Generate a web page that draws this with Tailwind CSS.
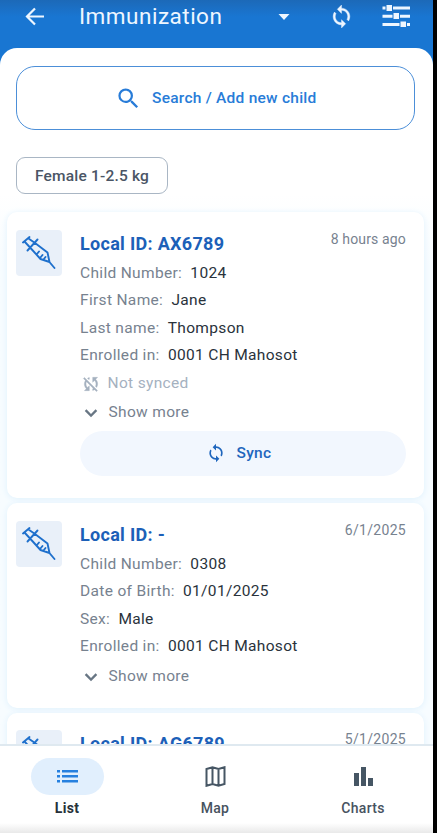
<!DOCTYPE html>
<html lang="en">
<head>
<meta charset="utf-8">
<title>Immunization</title>
<script src="https://cdn.jsdelivr.net/npm/@tailwindcss/browser@4"></script>
</head>
<body class="h-[833px] w-[437px] overflow-hidden bg-black font-['Roboto',sans-serif]">
<svg class="hidden">
  <symbol id="sync" viewBox="0 0 24 24"><path d="M12 4V1L8 5l4 4V6c3.31 0 6 2.69 6 6 0 1.01-.25 1.97-.7 2.8l1.46 1.46C19.54 15.03 20 13.57 20 12c0-4.42-3.58-8-8-8zm0 14c-3.31 0-6-2.69-6-6 0-1.01.25-1.97.7-2.8L5.24 7.74C4.46 8.97 4 10.43 4 12c0 4.42 3.58 8 8 8v3l4-4-4-4v3z"/></symbol>
  <symbol id="syringe" viewBox="0 0 46 46"><g fill="none" stroke="#1f70cc" stroke-width="1.900" stroke-linecap="round" stroke-linejoin="round"><path d="M7 12.500L13.500 7M8.500 11.500L14.500 18M12.500 8.500L19 13M11.500 20.500L21.500 9.500M14.500 18L24.500 29L33.500 32L31.500 22.500L19 13M33 31.500L38.500 38M20.500 24.500L23 21.500M24 28L26.500 25M27.500 29.500L29.500 27"/></g></symbol>
  <symbol id="chevron" viewBox="0 0 24 24"><path d="M7 8 12 13L17 8l1.800 1.800L12 16.500L5.200 9.800z"/></symbol>
</svg>
<div class="relative flex h-[833px] w-[433px] flex-col overflow-hidden bg-[#1976d2]">
  <header class="flex h-12 shrink-0 items-start bg-linear-to-b from-[#1c69b8] to-[#1976d2] to-35% text-[#eef6ff]">
    <svg class="mt-1 ml-[23px] size-6" viewBox="0 0 24 24" fill="none" stroke="currentColor" stroke-width="2.200"><path d="M21 12.500H4M12 4.500L4 12.500L12 20.500"/></svg>
    <h1 class="mt-[3px] ml-[32px] w-[190px] text-[22.500px] leading-[27px] tracking-[0.500px]">Immunization</h1>
    <svg class="mt-[5px] ml-[3px] size-6" viewBox="0 0 24 24" fill="currentColor"><path d="M6.500 9h11L12 15z"/></svg>
    <svg class="mt-1 ml-[33px] size-[25px]" fill="currentColor" stroke="currentColor" stroke-width=".4"><use href="#sync"/></svg>
    <svg class="mt-[3px] ml-[28px] h-6 w-[28px]" viewBox="0 0 28 24" fill="currentColor"><path d="M.500 3.500h3v3H.500zM4.500 2h5.500v6H4.500zM11 3.500h17v3H11zM.500 11.700h10v3H.500zM11.500 10h5.500v6h-5.500zM18 11.700h10v3H18zM.500 20h17v3H.500zM18.500 18.500h5.500v5.500h-5.500zM25 20h3v3h-3z"/></svg>
  </header>
  <main class="flex min-h-0 flex-1 flex-col overflow-hidden rounded-t-[17px] bg-white">
    <button class="mt-[18px] ml-4 flex h-[64px] w-[399px] shrink-0 items-center rounded-[19px] border-[1.500px] border-[#4c8fd8] pl-[98px] text-[#287cd8]">
      <svg class="size-[27px]" viewBox="0 0 24 24" fill="currentColor"><path d="M15.500 14h-.79l-.28-.27A6.470 6.470 0 0 0 16 9.500 6.500 6.500 0 1 0 9.500 16c1.610 0 3.090-.59 4.230-1.570l.27.28v.79l5 4.990L20.490 19l-4.990-5zm-6 0C7.010 14 5 11.990 5 9.500S7.010 5 9.500 5 14 7.010 14 9.500 11.990 14 9.500 14z"/></svg>
      <span class="mt-[2px] ml-[10px] text-[15.500px] font-medium tracking-[0.250px]">Search / Add new child</span>
    </button>
    <div class="mt-[27px] ml-4 flex h-[37px] w-[152px] shrink-0 items-center justify-center rounded-[9px] border-[1.500px] border-[#a9b6c4] pt-[2px] text-[15.500px] font-medium tracking-[0.200px] text-[#4a5565]">Female 1-2.5 kg</div>
    <section class="flex flex-col gap-[5px] bg-linear-to-b from-white to-[#f7fcff] to-10% pt-[18px] pr-[9px] pl-[7px]">
      <article class="flex h-[286px] shrink-0 rounded-[10px] bg-white pt-[18px] pl-[9px] shadow-[0_1px_6px_#dff1fc]">
        <div class="size-[46px] rounded-[4px] bg-[#e9f0f9]"><svg class="size-[46px]"><use href="#syringe"/></svg></div>
        <div class="ml-[18px] w-[326px] text-[15.500px] leading-[27.400px] tracking-[0.330px] text-[#77828f]">
          <div class="flex h-[30px] justify-between"><h2 class="text-[18px] leading-[27px] font-bold tracking-[0.300px] text-[#1c60b8]">Local ID: AX6789</h2><time class="text-[14px] leading-[18px] tracking-[0.150px]">8 hours ago</time></div>
          <p>Child Number: <b class="ml-1 font-normal text-[#29323b]">1024</b></p>
          <p>First Name: <b class="ml-1 font-normal text-[#29323b]">Jane</b></p>
          <p>Last name: <b class="ml-1 font-normal text-[#29323b]">Thompson</b></p>
          <p>Enrolled in: <b class="ml-1 font-normal text-[#29323b]">0001 CH Mahosot</b></p>
          <div class="flex h-[28px] items-center text-[#a5b1bf]"><svg class="ml-[1px] size-[20px]" viewBox="0 0 24 24" fill="currentColor" stroke="currentColor" stroke-width=".4"><path d="M10 6.350V4.260c-.8.210-1.550.540-2.230.960l1.460 1.460c.25-.12.500-.24.770-.33zM2.860 5.410l2.360 2.360A7.930 7.930 0 0 0 4 12c0 2.210.910 4.200 2.360 5.640L4 20h6v-6l-2.240 2.240A6.003 6.003 0 0 1 6 12c0-1 .25-1.940.68-2.770l8.080 8.080c-.25.130-.5.250-.77.340v2.090c.8-.210 1.550-.540 2.230-.960l2.360 2.360 1.270-1.270L4.140 4.140 2.860 5.410zM20 4h-6v6l2.240-2.240A6.003 6.003 0 0 1 18 12c0 1-.25 1.940-.68 2.770l1.460 1.460A7.930 7.930 0 0 0 20 12c0-2.210-.91-4.200-2.360-5.640L20 4z"/></svg><span class="ml-[6.500px]">Not synced</span></div>
          <div class="flex h-[31px] items-center"><svg class="size-[22px]" fill="#687684"><use href="#chevron"/></svg><span class="ml-[6.500px]">Show more</span></div>
          <button class="mt-[2px] flex h-[45px] w-[326px] items-center justify-center rounded-full bg-[#f2f7fe] pr-[8px] font-medium text-[#1f66bd]"><svg class="size-[20px]" fill="currentColor"><use href="#sync"/></svg><span class="mt-px ml-[10px]">Sync</span></button>
        </div>
      </article>
      <article class="flex h-[205px] shrink-0 rounded-[10px] bg-white pt-[18px] pl-[9px] shadow-[0_1px_6px_#dff1fc]">
        <div class="size-[46px] rounded-[4px] bg-[#e9f0f9]"><svg class="size-[46px]"><use href="#syringe"/></svg></div>
        <div class="ml-[18px] w-[326px] text-[15.500px] leading-[27.400px] tracking-[0.330px] text-[#77828f]">
          <div class="flex h-[30px] justify-between"><h2 class="text-[18px] leading-[27px] font-bold tracking-[0.300px] text-[#1c60b8]">Local ID: -</h2><time class="text-[14px] leading-[18px] tracking-[0.300px]">6/1/2025</time></div>
          <p>Child Number: <b class="ml-1 font-normal text-[#29323b]">0308</b></p>
          <p>Date of Birth: <b class="ml-1 font-normal text-[#29323b]">01/01/2025</b></p>
          <p>Sex: <b class="ml-1 font-normal text-[#29323b]">Male</b></p>
          <p>Enrolled in: <b class="ml-1 font-normal text-[#29323b]">0001 CH Mahosot</b></p>
          <div class="flex h-[32px] items-center"><svg class="size-[22px]" fill="#687684"><use href="#chevron"/></svg><span class="ml-[6.500px]">Show more</span></div>
        </div>
      </article>
      <article class="flex h-[205px] shrink-0 rounded-[10px] bg-white pt-[17px] pl-[9px] shadow-[0_1px_6px_#dff1fc]">
        <div class="size-[46px] rounded-[4px] bg-[#e9f0f9]"><svg class="size-[46px]"><use href="#syringe"/></svg></div>
        <div class="ml-[18px] w-[326px] text-[#77828f]">
          <div class="flex h-[29px] justify-between"><h2 class="text-[18px] leading-[27px] font-bold tracking-[0.300px] text-[#1c60b8]">Local ID: AG6789</h2><time class="text-[14px] leading-[18px] tracking-[0.300px]">5/1/2025</time></div>
        </div>
      </article>
    </section>
  </main>
  <nav class="relative h-[89px] shrink-0 border-t-2 border-[#dfe9f0] bg-white text-[14px] font-medium tracking-[0.300px] text-[#47535f]">
    <div class="flex pl-[30px]">
      <div class="flex w-[74px] flex-col items-center pt-[12px]"><div class="flex h-[37px] w-[73px] items-center justify-center rounded-full bg-[#e1effd]"><svg class="h-[13px] w-[21px]" viewBox="0 0 21 13" fill="#2680df"><path d="M0 0h3v2.500H0zM5 0h16v2.500H5zM0 5h3v2.500H0zM5 5h16v2.500H5zM0 10h3v2.500H0zM5 10h16v2.500H5z"/></svg></div><span class="mt-[4px] leading-[18px] font-bold text-[#27313a]">List</span></div>
      <div class="ml-[74px] flex w-[74px] flex-col items-center pt-[12px]"><div class="flex h-[37px] items-center"><svg class="h-[21px] w-[21px]" viewBox="0 0 21 21" fill="none" stroke="#465664" stroke-width="2"><path d="M1.500 3L7.500 1.200L13.500 3L19.500 1.200V18L13.500 19.800L7.500 18L1.500 19.800ZM7.500 1.200V18M13.500 3V19.800"/></svg></div><span class="mt-[4px] leading-[18px]">Map</span></div>
      <div class="ml-[74px] flex w-[74px] flex-col items-center pt-[12px]"><div class="flex h-[37px] items-center"><svg class="h-[19px] w-[19px]" viewBox="0 0 19 19" fill="#465664"><path d="M0 6h5v13H0zM7 0h5v19H7zM14 11h5v8h-5z"/></svg></div><span class="mt-[4px] leading-[18px]">Charts</span></div>
    </div>
    <div class="absolute inset-x-0 bottom-0 h-[10px] bg-linear-to-b from-white to-[#e9e9e9]"></div>
  </nav>
</div>
</body>
</html>
